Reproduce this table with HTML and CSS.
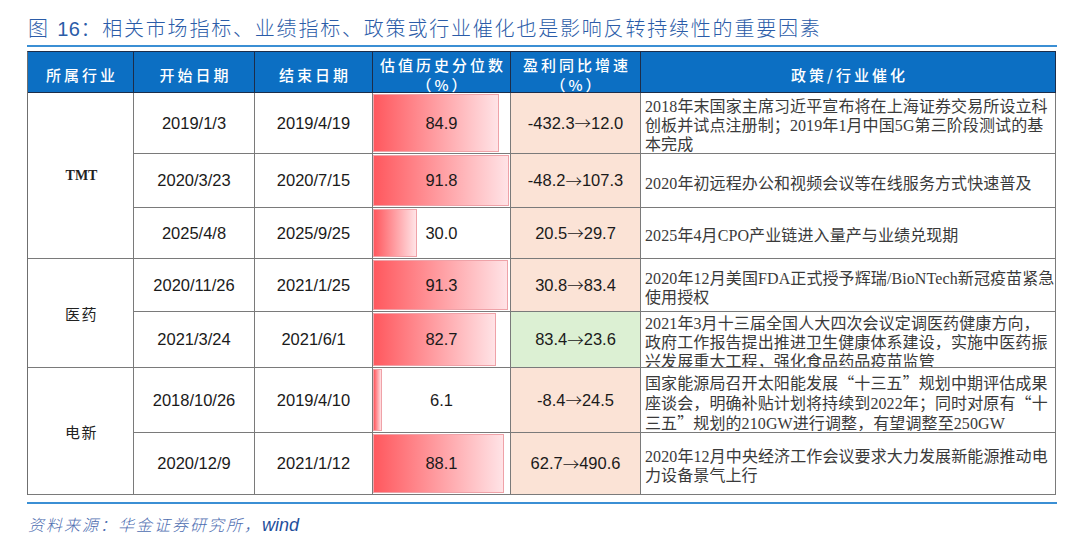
FILE: index.html
```html
<!DOCTYPE html>
<html lang="zh-CN">
<head>
<meta charset="utf-8">
<title>图16</title>
<link rel="stylesheet" href="styles.css">
</head>
<body>
<div class="page">
  <h1 class="title">图 <span class="num">16</span>：相关市场指标、业绩指标、政策或行业催化也是影响反转持续性的重要因素</h1>

  <div class="table">
    <div class="th">所属行业</div>
    <div class="th">开始日期</div>
    <div class="th">结束日期</div>
    <div class="th two">估值历史分位数<br>（%）</div>
    <div class="th two">盈利同比增速<br>（%）</div>
    <div class="th">政策/行业催化</div>

    <div class="td ind r-tmt">TMT</div>
    <div class="td ind r-med">医药</div>
    <div class="td ind r-ele">电新</div>

    <div class="td date">2019/1/3</div>
    <div class="td date">2019/4/19</div>
    <div class="td bar-cell"><div class="bar" style="--v:84.9"></div><div class="val">84.9</div></div>
    <div class="td growth">-432.3<span class="arr">→</span>12.0</div>
    <div class="td policy"><div>2018年末国家主席习近平宣布将在上海证券交易所设立科<br>创板并试点注册制；2019年1月中国5G第三阶段测试的基<br>本完成</div></div>

    <div class="td date">2020/3/23</div>
    <div class="td date">2020/7/15</div>
    <div class="td bar-cell"><div class="bar" style="--v:91.8"></div><div class="val">91.8</div></div>
    <div class="td growth">-48.2<span class="arr">→</span>107.3</div>
    <div class="td policy"><div>2020年初远程办公和视频会议等在线服务方式快速普及</div></div>

    <div class="td date">2025/4/8</div>
    <div class="td date">2025/9/25</div>
    <div class="td bar-cell"><div class="bar" style="--v:30.0"></div><div class="val">30.0</div></div>
    <div class="td growth">20.5<span class="arr">→</span>29.7</div>
    <div class="td policy"><div>2025年4月CPO产业链进入量产与业绩兑现期</div></div>

    <div class="td date">2020/11/26</div>
    <div class="td date">2021/1/25</div>
    <div class="td bar-cell"><div class="bar" style="--v:91.3"></div><div class="val">91.3</div></div>
    <div class="td growth">30.8<span class="arr">→</span>83.4</div>
    <div class="td policy"><div>2020年12月美国FDA正式授予辉瑞/BioNTech新冠疫苗紧急<br>使用授权</div></div>

    <div class="td date">2021/3/24</div>
    <div class="td date">2021/6/1</div>
    <div class="td bar-cell"><div class="bar" style="--v:82.7"></div><div class="val">82.7</div></div>
    <div class="td growth down">83.4<span class="arr">→</span>23.6</div>
    <div class="td policy"><div>2021年3月十三届全国人大四次会议定调医药健康方向，<br>政府工作报告提出推进卫生健康体系建设，实施中医药振<br>兴发展重大工程，强化食品药品疫苗监管</div></div>

    <div class="td date">2018/10/26</div>
    <div class="td date">2019/4/10</div>
    <div class="td bar-cell"><div class="bar" style="--v:6.1"></div><div class="val">6.1</div></div>
    <div class="td growth">-8.4<span class="arr">→</span>24.5</div>
    <div class="td policy"><div>国家能源局召开太阳能发展<span class="q">“</span>十三五<span class="q">”</span>规划中期评估成果<br>座谈会，明确补贴计划将持续到2022年；同时对原有<span class="q">“</span>十<br>三五<span class="q">”</span>规划的210GW进行调整，有望调整至250GW</div></div>

    <div class="td date">2020/12/9</div>
    <div class="td date">2021/1/12</div>
    <div class="td bar-cell"><div class="bar" style="--v:88.1"></div><div class="val">88.1</div></div>
    <div class="td growth">62.7<span class="arr">→</span>490.6</div>
    <div class="td policy"><div>2020年12月中央经济工作会议要求大力发展新能源推动电<br>力设备景气上行</div></div>
  </div>

  <p class="source"><span class="src-cn">资料来源：华金证券研究所，</span><span class="src-en">wind</span></p>
</div>
</body>
</html>
```

FILE: styles.css
```css
* {
  box-sizing: border-box;
}

html, body {
  margin: 0;
  padding: 0;
  background: #ffffff;
}

body {
  font-family: "Liberation Sans", "Noto Sans CJK SC", sans-serif;
  width: 1080px;
  height: 550px;
  overflow: hidden;
}

.page {
  width: 1030px;
  margin-left: 27px;
}

.title {
  margin: 0;
  padding: 17px 0 4px 1px;
  line-height: 24px;
  font-size: 20px;
  font-weight: 300;
  letter-spacing: 1.8px;
  color: #2b5ca8;
  border-bottom: 2px solid #3b8fd4;
  white-space: nowrap;
}

.title .num {
  font-family: "Liberation Sans", sans-serif;
  font-weight: 400;
  letter-spacing: 0.5px;
}

.table {
  margin-top: 4px;
  width: 1029px;
  display: grid;
  grid-template-columns: 106px 121px 118px 138px 130px 415px;
  grid-template-rows: 41px 61px 54px 51px 53px 56px 65px 62px;
  border-left: 1px solid #6f6f6f;
  border-top: 1px solid #1c2d4a;
}

.th {
  background: #0c6fc3;
  color: #ffffff;
  font-family: "Noto Sans CJK SC", sans-serif;
  font-size: 15px;
  font-weight: 500;
  letter-spacing: 3px;
  line-height: 20px;
  text-align: center;
  padding: 6px 0 0 3px;
  display: flex;
  align-items: center;
  justify-content: center;
  border-right: 1px solid #1c2d4a;
  border-bottom: 1px solid #1c2d4a;
}

.th:last-of-type {
  border-right-color: #6f6f6f;
}

.td {
  border-right: 1px solid #7a7a7a;
  border-bottom: 1px solid #7a7a7a;
  display: flex;
  align-items: center;
  justify-content: center;
  color: #1a1a1a;
}

.ind {
  grid-column: 1;
  font-family: "Liberation Serif", "Noto Sans CJK SC", serif;
  font-size: 15px;
  letter-spacing: 1.5px;
  padding-left: 2px;
  color: #222222;
}

.r-tmt { grid-row: 2 / span 3; font-size: 14px; letter-spacing: 0; font-weight: 700; }
.r-med { grid-row: 5 / span 2; }
.r-ele { grid-row: 7 / span 2; }

.date {
  font-size: 16.5px;
}

.bar-cell {
  display: grid;
  grid-template-columns: 1fr;
  grid-template-rows: 1fr;
  align-items: stretch;
  justify-items: start;
}

.bar {
  grid-area: 1 / 1;
  width: calc(var(--v) / 91.8 * 136px);
  margin: 1px 0 1px 0;
  border: 1px solid #efa2a8;
  background: linear-gradient(90deg, #ff585e 0%, #ffe3e6 100%);
}

.val {
  grid-area: 1 / 1;
  place-self: center;
  font-size: 16.5px;
  color: #1a1a1a;
}

.growth {
  background: #fbe3d6;
  font-size: 16.5px;
}

.growth.down {
  background: #dcf0d3;
}

.arr {
  font-family: "Noto Sans CJK SC", sans-serif;
  font-weight: 300;
}

.policy {
  justify-content: flex-start;
  padding: 5px 4px 0 4px;
  overflow: hidden;
  font-family: "Liberation Serif", "Noto Sans CJK SC", serif;
  font-size: 16px;
  line-height: 19px;
  letter-spacing: 0.1px;
  color: #3a3a3a;
  white-space: nowrap;
}

.q {
  font-family: "Noto Sans CJK SC", sans-serif;
}

.source {
  margin: 7px 0 0 0;
  padding: 9px 0 0 1px;
  border-top: 2px solid #3b8fd4;
  line-height: 22px;
  font-style: italic;
  white-space: nowrap;
}

.src-cn {
  font-family: "Noto Sans CJK SC", sans-serif;
  font-size: 16px;
  font-weight: 300;
  letter-spacing: 2px;
  color: #4d6db0;
}

.src-en {
  font-family: "Liberation Sans", sans-serif;
  font-size: 18px;
  color: #1f4f9c;
}
```
